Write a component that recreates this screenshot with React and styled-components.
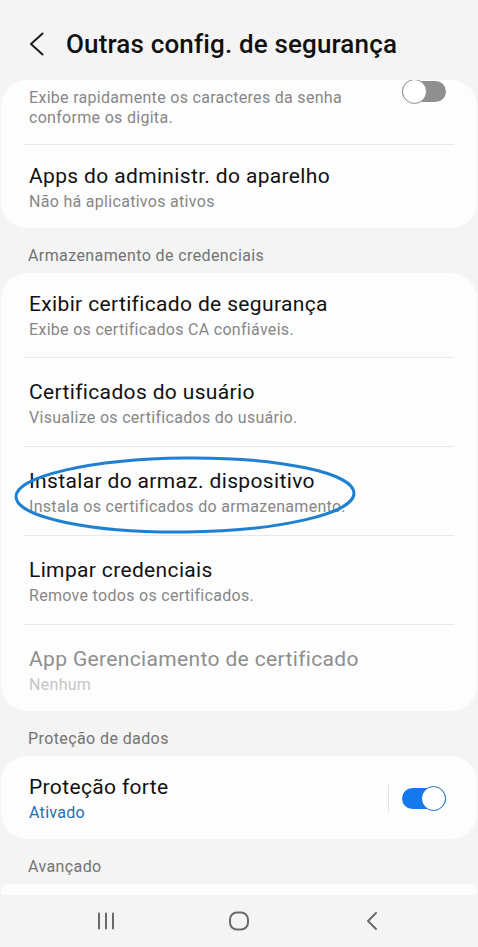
import React from 'react';
import styled, { createGlobalStyle } from 'styled-components';

const GlobalStyle = createGlobalStyle`
  html, body {
    margin: 0;
    padding: 0;
    background: #f4f4f4;
    font-family: Roboto, "Noto Sans", "Liberation Sans", sans-serif;
  }
`;

const Page = styled.div`
  width: 478px;
  height: 947px;
  display: flex;
  flex-direction: column;
  overflow: hidden;
  background: #f4f4f4;
`;

const Header = styled.header`
  height: 80px;
  flex-shrink: 0;
  display: flex;
  align-items: center;
  padding: 8px 0 0 28px;
  box-sizing: border-box;
  gap: 20px;
`;

const Title = styled.h1`
  margin: 0;
  font-size: 26px;
  font-weight: 500;
  color: #111;
  letter-spacing: 0.15px;
`;

const Content = styled.main`
  flex: 1;
  overflow: hidden;
  display: flex;
  flex-direction: column;
`;

const Card = styled.section`
  background: #fdfdfd;
  border-radius: 26px;
  margin: 0 1px;
  flex-shrink: 0;
  min-height: ${p => (p.$peek ? '14px' : 'auto')};
`;

const Row = styled.div`
  position: relative;
  display: flex;
  align-items: ${p => (p.$top ? 'flex-start' : 'center')};
  padding: ${p => (p.$compact ? '18px' : '21px')} 31px 18px 28px;
  ${Card} > &:first-child {
    padding-top: ${p => (p.$clipped ? '8px' : '18px')};
  }
  ${Card} > &:first-child:not(:last-child) {
    padding-bottom: 17px;
  }
  ${Card} > &:last-child {
    padding-bottom: 16px;
  }
`;

const Texts = styled.div`
  flex: 1;
  display: flex;
  flex-direction: column;
`;

const ItemTitle = styled.div`
  font-size: 21px;
  line-height: 26px;
  letter-spacing: 0.35px;
  color: ${p => (p.$disabled ? '#8e8e8e' : '#111')};
`;

const ItemSub = styled.div`
  font-size: 16px;
  line-height: ${p => (p.$tight ? '19.5px' : '20px')};
  letter-spacing: 0.3px;
  margin-top: ${p => (p.$tight ? 0 : 3)}px;
  color: ${p => p.$color || '#878787'};
  max-width: ${p => (p.$narrow ? '330px' : 'none')};
`;

const Divider = styled.div`
  height: 1px;
  margin: 0 23px;
  background: #e8e8e8;
`;

const SectionLabel = styled.div`
  padding: 18px 28px 7px;
  font-size: 16px;
  line-height: 20px;
  letter-spacing: 0.4px;
  color: #737373;
  flex-shrink: 0;
`;

const Switch = styled.div`
  width: 44px;
  height: 25px;
  flex-shrink: 0;
  display: flex;
  align-items: center;
  margin-top: ${p => p.$offset || 0}px;
`;

const Track = styled.div`
  width: 100%;
  height: 21px;
  display: flex;
  align-items: center;
  justify-content: ${p => (p.$on ? 'flex-end' : 'flex-start')};
  border-radius: 11px;
  background: ${p => (p.$on ? '#1579ee' : '#8f8f8f')};
`;

const Knob = styled.div`
  width: 25px;
  height: 25px;
  margin: -2px 0;
  border-radius: 50%;
  background: #fff;
  box-sizing: border-box;
  border: 1.5px solid ${p => (p.$on ? '#1d6fc7' : '#8f8f8f')};
`;

const VLine = styled.div`
  width: 1px;
  height: 27px;
  background: #e2e2e2;
  margin-right: 13px;
`;

const Circle = styled.svg`
  position: absolute;
  left: 12px;
  top: 8px;
  pointer-events: none;
`;

const NavBar = styled.nav`
  height: 52px;
  flex-shrink: 0;
  display: grid;
  grid-template-columns: 1fr 1fr 1fr;
  align-items: center;
  justify-items: center;
  padding: 0 40px;
  background: #f4f4f4;
`;

const NavButton = styled.div`
  display: flex;
  align-items: center;
  justify-content: center;
  color: #6a6a6a;
`;

const Toggle = ({ on, offset }) => (
  <Switch $offset={offset}>
    <Track $on={on}>
      <Knob $on={on} />
    </Track>
  </Switch>
);

const Item = ({ title, sub, disabled, subColor, compact, children }) => (
  <Row $compact={compact}>
    <Texts>
      <ItemTitle $disabled={disabled}>{title}</ItemTitle>
      <ItemSub $color={subColor}>{sub}</ItemSub>
    </Texts>
    {children}
  </Row>
);

export default function App() {
  return (
    <Page>
      <GlobalStyle />
      <Header>
        <svg width="18" height="24" viewBox="0 0 18 24">
          <path d="M14.5 1.5 L3 12 L14.5 22.5" fill="none" stroke="#1a1a1a" strokeWidth="2" strokeLinecap="round" strokeLinejoin="round" />
        </svg>
        <Title>Outras config. de segurança</Title>
      </Header>
      <Content>
        <Card>
          <Row $clipped $top>
            <Texts>
              <ItemSub $tight $narrow>Exibe rapidamente os caracteres da senha conforme os digita.</ItemSub>
            </Texts>
            <Toggle offset={-9} />
          </Row>
          <Divider />
          <Item compact title="Apps do administr. do aparelho" sub="Não há aplicativos ativos" />
        </Card>

        <SectionLabel>Armazenamento de credenciais</SectionLabel>
        <Card>
          <Item title="Exibir certificado de segurança" sub="Exibe os certificados CA confiáveis." />
          <Divider />
          <Item title="Certificados do usuário" sub="Visualize os certificados do usuário." />
          <Divider />
          <Row>
            <Texts>
              <ItemTitle>Instalar do armaz. dispositivo</ItemTitle>
              <ItemSub>Instala os certificados do armazenamento.</ItemSub>
            </Texts>
            <Circle width="346" height="82" viewBox="0 0 346 82">
              <ellipse cx="172" cy="40" rx="169" ry="37" fill="none" stroke="#1f80d0" strokeWidth="3" transform="rotate(-0.6 172 40)" />
            </Circle>
          </Row>
          <Divider />
          <Item title="Limpar credenciais" sub="Remove todos os certificados." />
          <Divider />
          <Item title="App Gerenciamento de certificado" sub="Nenhum" disabled subColor="#c6c6c6" />
        </Card>

        <SectionLabel>Proteção de dados</SectionLabel>
        <Card>
          <Item title="Proteção forte" sub="Ativado" subColor="#1f6fb5">
            <VLine />
            <Toggle on />
          </Item>
        </Card>

        <SectionLabel>Avançado</SectionLabel>
        <Card $peek />
      </Content>
      <NavBar>
        <NavButton>
          <svg width="20" height="18" viewBox="0 0 20 18">
            <path d="M3 1.5 V16.5 M10 1.5 V16.5 M17 1.5 V16.5" stroke="currentColor" strokeWidth="2" strokeLinecap="round" />
          </svg>
        </NavButton>
        <NavButton>
          <svg width="22" height="20" viewBox="0 0 22 20">
            <rect x="2" y="1.5" width="18" height="17" rx="7" fill="none" stroke="currentColor" strokeWidth="2" />
          </svg>
        </NavButton>
        <NavButton>
          <svg width="16" height="20" viewBox="0 0 16 20">
            <path d="M12 2 L4 10 L12 18" fill="none" stroke="currentColor" strokeWidth="2" strokeLinecap="round" strokeLinejoin="round" />
          </svg>
        </NavButton>
      </NavBar>
    </Page>
  );
}
